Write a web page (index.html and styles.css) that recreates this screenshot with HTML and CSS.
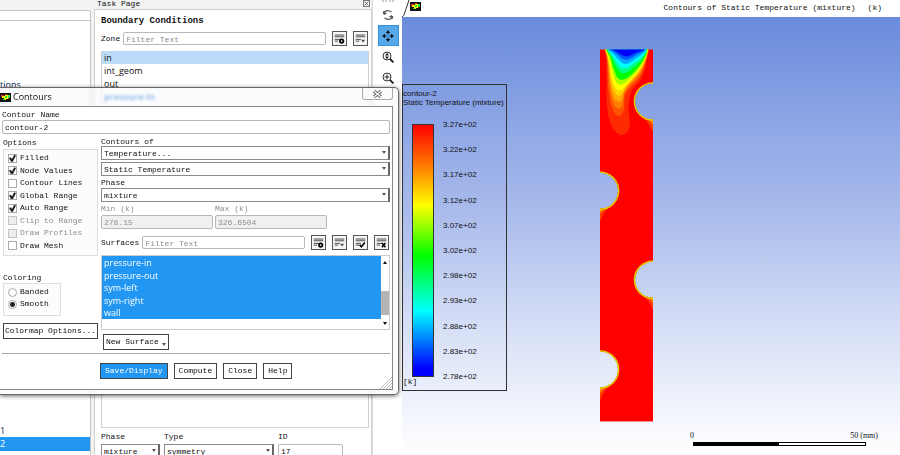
FILE: index.html
```
<!DOCTYPE html>
<html lang="en">
<head>
<meta charset="utf-8">
<title>Contours</title>
<link rel="stylesheet" href="styles.css">
</head>
<body>
<svg class="defs" aria-hidden="true">
  <defs>
    <symbol id="lines" viewBox="0 0 15 15"><path d="M2 3.500h11M2 5.500h11M2 8.500h6M2 10.500h4" stroke="#333" fill="none"/></symbol>
    <symbol id="filter-opt" viewBox="0 0 15 15"><use href="#lines"/><circle cx="10" cy="10.500" r="2" fill="none" stroke="#000" stroke-width="2"/></symbol>
    <symbol id="filter-down" viewBox="0 0 15 15"><use href="#lines"/><path d="M8 9h5l-2.500 3z" fill="#555"/></symbol>
    <symbol id="filter-check" viewBox="0 0 15 15"><use href="#lines"/><path d="M6.500 10l2 2.500 4-5" fill="none" stroke="#000" stroke-width="1.800"/></symbol>
    <symbol id="filter-x" viewBox="0 0 15 15"><use href="#lines"/><path d="M8 8l4 5M12 8l-4 5" fill="none" stroke="#000" stroke-width="1.800"/></symbol>
    <symbol id="app" viewBox="0 0 11 9"><path fill="#111" d="M0 0h11v9H0z"/><path fill="#e22" d="M1 2h3v2H1zM5 1h2v1H5z"/><path fill="#fe0" d="M2 3h3V2h3v4H6v1H4V5H2z"/><path fill="#2e3" d="M5 3h2v2H5zM8 2h2v3H8zM3 6h2v1H3z"/><path fill="#e22" d="M8 5h1v1H8z"/></symbol>
  </defs>
</svg>
<main class="app">
  <aside class="tree">
    <input class="tree-filter" aria-label="Filter outline">
    <div class="tree-body">
      <a class="tree-item" href="#conditions">tions</a>
      <div class="tree-end">
        <a class="tree-item" href="#c1">1</a>
        <a class="tree-item selected" href="#c2">2</a>
      </div>
    </div>
  </aside>
  <section class="task">
    <header class="task-head">
      <span>Task Page</span>
      <button class="close-mini" aria-label="Close task page"><svg viewBox="0 0 7 7"><path d="M1 1l5 5M6 1L1 6" stroke="#333"/></svg></button>
    </header>
    <div class="task-body">
      <h2>Boundary Conditions</h2>
      <div class="filter-row">
        <label for="zone">Zone</label>
        <input id="zone" class="field grow" placeholder="Filter Text">
        <button class="ibtn" aria-label="Filter options"><svg><use href="#filter-opt"/></svg></button>
        <button class="ibtn" aria-label="Filter menu"><svg><use href="#filter-down"/></svg></button>
      </div>
      <ul class="zones">
        <li class="on">in</li>
        <li>int_geom</li>
        <li>out</li>
        <li class="hot">pressure-in</li>
      </ul>
      <div class="zone-props">
        <div class="prop-phase"><label for="zphase">Phase</label><span class="combo"><select id="zphase"><option>mixture</option></select></span></div>
        <div class="prop-type"><label for="ztype">Type</label><span class="combo"><select id="ztype"><option>symmetry</option></select></span></div>
        <div class="prop-id"><label for="zid">ID</label><input id="zid" class="field" value="17"></div>
      </div>
    </div>
  </section>
  <nav class="tools">
    <span class="grip"></span>
    <button aria-label="Rotate"><svg viewBox="0 0 12 12"><path d="M1.500 5V3.500Q5 0 9.500 3M10.500 7v1.500Q7 12 2.500 9" fill="none" stroke="#555" stroke-width="1.200"/><path d="M1 2l1 4 3-1.500zM11 10l-1-4-3 1.500z" fill="#555"/></svg></button>
    <button class="active" aria-label="Pan"><svg viewBox="0 0 12 12"><path d="M6 0l2.200 3H3.800zM6 12l2.200-3H3.800zM0 6l3-2.200v4.400zM12 6L9 3.800v4.400z" fill="#112"/><path d="M6 2v2.500M6 7.500V10M2 6h2.500M7.500 6H10" stroke="#112"/></svg></button>
    <button aria-label="Zoom to fit"><svg viewBox="0 0 12 12"><circle cx="5" cy="5" r="4" fill="none" stroke="#333"/><path d="M8 8l3.500 3.500" stroke="#222" stroke-width="1.800"/><path d="M5 1.800L7 4.500H3zM5 8.200L7 5.500H3z" fill="#222"/></svg></button>
    <button aria-label="Zoom in"><svg viewBox="0 0 12 12"><circle cx="5" cy="5" r="4" fill="none" stroke="#333"/><path d="M8 8l3.500 3.500" stroke="#222" stroke-width="1.800"/><path d="M5 2.500v5M2.500 5h5" stroke="#222"/></svg></button>
  </nav>
  <section class="view">
    <header class="view-head">
      <svg class="tab-edge" viewBox="0 0 8 17"><path d="M0 17Q2 16 3 12L7 0" fill="none" stroke="#333"/></svg>
      <svg class="app-icon"><use href="#app"/></svg>
      <h1>Contours of Static Temperature (mixture)</h1><span class="unit">(k)</span>
    </header>
    <div class="canvas">
      <div class="legend">
        <p>contour-2<br>Static Temperature (mixture)</p>
        <div class="legend-body">
          <div class="ramp"></div>
          <ol>
            <li>3.27e+02</li><li>3.22e+02</li><li>3.17e+02</li><li>3.12e+02</li><li>3.07e+02</li><li>3.02e+02</li><li>2.98e+02</li><li>2.93e+02</li><li>2.88e+02</li><li>2.83e+02</li><li>2.78e+02</li>
          </ol>
        </div>
        <span class="legend-unit">[k]</span>
      </div>
      <svg class="model" viewBox="30 28 159 1118" role="img" aria-label="Temperature field">
        <defs><clipPath id="body"><path d="M30 28H189V131A54 54 0 0 0 189 239V666A54 54 0 0 0 189 774V1146H30V1043A54 54 0 0 0 30 935V507A54 54 0 0 0 30 399Z"/></clipPath></defs>
        <g clip-path="url(#body)">
          <path fill="#f00" d="M30 28h159v1118H30z"/>
          <path fill="#ff2b00" d="M42 28C54 60 48 130 50 190C54 250 75 285 97 285C118 284 122 255 118 235C112 190 118 150 140 135C162 118 172 60 178 28Z"/>
          <path fill="#ff5500" d="M44 28C57 60 50 125 57 165C64 212 76 228 88 228C101 226 104 205 103 182C104 155 122 142 140 124C160 104 170 60 176 28Z"/>
          <path fill="#ff8000" d="M44 28C58 60 54 115 60 150C66 192 76 206 87 206C98 204 100 188 101 170C104 150 122 134 138 118C158 98 170 60 176 28Z"/>
          <path fill="#ffaa00" d="M45 28C59 60 56 110 62 138C68 172 76 186 87 186C98 184 98 170 102 156C108 142 122 128 138 112C156 94 169 56 175 28Z"/>
          <path fill="#ffd500" d="M45 28C60 60 58 105 64 128C70 156 78 168 88 168C98 166 100 154 106 144C112 134 126 120 139 106C156 88 168 56 175 28Z"/>
          <path fill="#ff0" d="M46 28C61 58 61 98 66 116C72 142 80 152 89 152C99 150 104 140 112 132C120 124 130 112 141 100C156 82 168 54 174 28Z"/>
          <path fill="#a8ff00" d="M46 28C63 54 64 88 70 104C76 126 82 135 92 135C102 133 110 124 118 118C128 110 134 102 143 92C156 76 167 52 174 28Z"/>
          <path fill="#0f0" d="M47 28C66 52 66 78 74 94C80 112 86 120 96 120C106 119 114 112 122 106C130 99 137 92 144 83C156 70 167 50 173 28Z"/>
          <path fill="#00ff80" d="M48 28C68 48 70 68 78 80C85 94 92 101 101 101C111 100 118 94 126 87C134 80 140 76 146 70C156 60 166 46 172 28Z"/>
          <path fill="#0ff" d="M49 28C69 44 74 60 82 70C90 81 96 86 104 86C113 85 120 78 128 73C136 67 142 64 148 59C157 51 165 42 171 28Z"/>
          <path fill="#00a8ff" d="M50 28C70 39 77 51 86 60C94 69 99 73 107 73C115 72 122 67 130 62C138 56 145 52 151 47C159 40 165 36 170 28Z"/>
          <path fill="#0055ff" d="M54 28C72 34 80 42 88 49C96 57 102 60 109 60C117 59 125 54 132 49C142 43 156 38 168 28Z"/>
          <path fill="#00f" d="M58 28C74 31 82 36 90 42C98 48 104 50 111 50C119 49 126 44 134 40C144 35 158 32 166 28Z"/>
          <g fill="#ff3c00"><path d="M158 232Q176 245 189 278V232zM158 767Q178 782 189 810V767zM60 500Q42 514 30 544V500zM60 1036Q42 1050 30 1082V1036z"/></g>
          <g fill="#ff8c00"><path d="M166 234Q182 242 189 256V234zM166 769Q182 776 189 790V769zM52 503Q38 510 30 520V503zM52 1039Q38 1046 30 1060V1039z"/></g>
          <g fill="none" stroke="#ffae00" stroke-width="8"><path d="M189 131A54 54 0 0 0 189 239M189 666A54 54 0 0 0 189 774M30 1043A54 54 0 0 0 30 935M30 507A54 54 0 0 0 30 399"/></g>
          <g fill="none" stroke="#b4f000" stroke-width="6" stroke-dasharray="6 3"><path d="M189 131A54 54 0 0 0 189 239M189 666A54 54 0 0 0 189 774M30 1043A54 54 0 0 0 30 935M30 507A54 54 0 0 0 30 399"/></g>
        </g>
      </svg>
      <div class="scale">
        <div class="scale-text"><span>0</span><span>50 (mm)</span></div>
        <div class="scale-bar"></div>
      </div>
    </div>
  </section>
</main>
<form class="dialog" role="dialog" aria-labelledby="dlg-title">
  <header class="titlebar">
    <svg class="app-icon"><use href="#app"/></svg>
    <h2 id="dlg-title">Contours</h2>
    <button type="button" class="win-close" aria-label="Close window"><svg viewBox="0 0 9 8"><path d="M1 1l7 6M8 1L1 7" stroke="#555" stroke-width="3"/><path d="M1 1l7 6M8 1L1 7" stroke="#fff" stroke-width="1.400"/></svg></button>
  </header>
  <div class="client">
    <label class="lbl" for="cname">Contour Name</label>
    <input id="cname" class="field name" value="contour-2">
    <div class="cols">
      <div class="left">
        <span class="lbl options-label">Options</span>
        <div class="group checks">
          <label><input type="checkbox" checked>Filled</label>
          <label><input type="checkbox" checked>Node Values</label>
          <label><input type="checkbox">Contour Lines</label>
          <label><input type="checkbox" checked>Global Range</label>
          <label><input type="checkbox" checked>Auto Range</label>
          <label class="off"><input type="checkbox" disabled>Clip to Range</label>
          <label class="off"><input type="checkbox" disabled>Draw Profiles</label>
          <label><input type="checkbox">Draw Mesh</label>
        </div>
        <span class="lbl coloring-label">Coloring</span>
        <div class="group radios">
          <label><input type="radio" name="coloring">Banded</label>
          <label><input type="radio" name="coloring" checked>Smooth</label>
        </div>
        <button type="button" class="btn colormap">Colormap Options...</button>
      </div>
      <div class="right">
        <label class="lbl first" for="field1">Contours of</label>
        <span class="combo"><select id="field1"><option>Temperature...</option></select></span>
        <span class="combo second"><select aria-label="Variable"><option>Static Temperature</option></select></span>
        <label class="lbl" for="phase">Phase</label>
        <span class="combo"><select id="phase"><option>mixture</option></select></span>
        <div class="range">
          <div><label class="lbl off" for="min">Min (k)</label><input id="min" class="field" value="278.15" disabled></div>
          <div><label class="lbl off" for="max">Max (k)</label><input id="max" class="field" value="326.6504" disabled></div>
        </div>
        <div class="filter-row surf">
          <label for="surf">Surfaces</label>
          <input id="surf" class="field grow" placeholder="Filter Text">
          <button type="button" class="ibtn" aria-label="Filter options"><svg><use href="#filter-opt"/></svg></button>
          <button type="button" class="ibtn" aria-label="Filter menu"><svg><use href="#filter-down"/></svg></button>
          <button type="button" class="ibtn" aria-label="Select all"><svg><use href="#filter-check"/></svg></button>
          <button type="button" class="ibtn" aria-label="Clear selection"><svg><use href="#filter-x"/></svg></button>
        </div>
        <div class="surfaces">
          <ul><li>pressure-in</li><li>pressure-out</li><li>sym-left</li><li>sym-right</li><li>wall</li></ul>
          <div class="scroll"><i class="up"></i><i class="thumb"></i><i class="down"></i></div>
        </div>
        <button type="button" class="btn new-surface">New Surface<i class="down"></i></button>
      </div>
    </div>
    <hr>
    <footer class="actions">
      <button type="button" class="btn primary">Save/Display</button>
      <button type="button" class="btn">Compute</button>
      <button type="button" class="btn">Close</button>
      <button type="button" class="btn">Help</button>
    </footer>
    <svg class="resize" viewBox="0 0 12 12"><path d="M0 12L12 0M3 12l9-9M6 12l6-6M9 12l3-3" stroke="#bbb"/></svg>
  </div>
</form>
</body>
</html>
```

FILE: styles.css
```
* { box-sizing: border-box; }

body {
  margin: 0;
  height: 100vh;
  overflow: hidden;
  position: relative;
  background: #f3f3f3;
  color: #111;
  font: 8px/12px "Liberation Mono", monospace;
}

h1, h2, p, ul, ol { margin: 0; padding: 0; font: inherit; list-style: none; }
button, input, select { font: inherit; color: inherit; margin: 0; }
button { padding: 0; border: 0; background: none; }
svg { display: block; }
.defs { position: absolute; width: 0; height: 0; }

.app {
  display: grid;
  grid-template-columns: 91px 281px 30px minmax(0, 1fr);
  height: 100%;
}

/* outline tree */
.tree { display: flex; flex-direction: column; padding-top: 10px; }
.tree-filter {
  width: 100%;
  height: 11px;
  border: 1px solid #c4c4c4;
  border-left: 0;
  border-radius: 0 2px 0 0;
  background: #fff;
}
.tree-body {
  flex: 1;
  display: flex;
  flex-direction: column;
  justify-content: space-between;
  padding: 57px 0 4px;
  border-right: 1px solid #c4c4c4;
  background: #fff;
}
.tree-item {
  display: block;
  height: 13px;
  color: #0f2f66;
  text-decoration: none;
  font: 9px/13px "Open Sans", sans-serif;
}
.tree-item.selected { height: 14px; background: #2196f3; color: #fff; }

/* task page */
.task { display: flex; flex-direction: column; padding-left: 3px; }
.task-head { display: flex; justify-content: space-between; height: 9px; line-height: 7px; padding: 0 2px 0 3px; }
.close-mini { width: 7px; height: 7px; border: 1px solid #777; }
.close-mini svg { width: 5px; height: 5px; }
.task-body {
  flex: 1;
  display: flex;
  flex-direction: column;
  padding: 5px 2px 0 6px;
  border: 1px solid #d0d0d0;
  border-bottom: 0;
  background: #fff;
}
.task-body h2 { font-size: 9px; font-weight: bold; line-height: 12px; }
.filter-row { display: flex; align-items: center; gap: 6px; height: 15px; }
.task-body .filter-row { margin: 4px 1px 0 0; }
.filter-row label { margin-right: -3px; line-height: 14px; }
.grow { flex: 1; min-width: 0; }
.field {
  height: 13px;
  padding: 1px 2px 0;
  border: 1px solid #b8b8b8;
  border-radius: 2px;
  background: #fff;
  outline: 0;
}
.field::placeholder { color: #8c8c8c; opacity: 1; }
.ibtn { width: 15px; height: 15px; border: 1px solid #555; background: #f6f6f6; }
.ibtn svg { width: 13px; height: 13px; }
.zones {
  flex: 1;
  margin-top: 5px;
  border: 1px solid #d0d0d0;
  border-top: 0;
  font: 9px/14px "Open Sans", sans-serif;
}
.zones li { height: 13px; padding-left: 2px; }
.zones .on { background: #badcf8; }
.zones .hot { color: #0066e0; font-weight: bold; }
.zone-props { display: flex; gap: 4px; height: 25px; margin-top: 2px; }
.zone-props label { display: block; line-height: 14px; }
.prop-phase { width: 59px; }
.prop-type { width: 110px; }
.prop-id { width: 65px; }
.prop-id .field { width: 100%; }

.combo { display: block; position: relative; }
.combo select {
  appearance: none;
  display: block;
  width: 100%;
  height: 14px;
  padding: 1px 12px 0 2px;
  border: 1px solid #8a8a8a;
  border-right: 2px solid #666;
  border-radius: 0;
  background: #fff;
}
.combo::after {
  content: "";
  position: absolute;
  right: 4px;
  top: 5px;
  border: 2px solid transparent;
  border-top: 3px solid #555;
  border-bottom: 0;
}

/* view tools */
.tools { display: flex; flex-direction: column; align-items: center; padding-left: 1px; background: #fff; border-left: 1px solid #ddd; }
.tools .grip { width: 12px; height: 4px; border-top: 2px dotted #ccc; }
.tools button { display: grid; place-items: center; width: 21px; height: 21px; }
.tools .active { background: #57a8e8; border: 1px solid #3a90d8; }
.tools svg { width: 12px; height: 12px; }

/* graphics view */
.view { display: flex; flex-direction: column; min-width: 0; }
.view-head { display: flex; align-items: flex-start; height: 17px; padding: 2px 18px 0 0; background: #fff; }
.app-icon { width: 11px; height: 9px; }
.tab-edge { width: 8px; height: 17px; margin-top: -2px; }
.view-head h1 { margin-left: auto; }
.unit { margin-left: 12px; }
.canvas {
  flex: 1;
  position: relative;
  display: flex;
  align-items: flex-start;
  background: linear-gradient(#6a8bdc, #aabcec 45%, #d5def6 70%, #fff);
}
.legend {
  width: 105px;
  margin-top: 67px;
  padding: 4px 0;
  border: 1px solid #333;
  font: 8px/9px "Liberation Sans", sans-serif;
  white-space: nowrap;
}
.legend-body { display: flex; align-items: center; gap: 9px; height: 261px; margin: 13px 0 0 9px; }
.ramp {
  width: 22px;
  height: 253px;
  border: 1px solid #333;
  background: linear-gradient(#f00, #ff8000 17%, #ff0 32%, #0f0 52%, #0ff 74%, #00f 97%);
}
.legend ol { display: flex; flex-direction: column; justify-content: space-between; height: 100%; }
.legend-unit { display: block; margin-top: -4px; font-family: "Liberation Mono", monospace; }
.model { width: 53px; height: 373px; margin: 32px 0 0 93px; }
.scale { position: absolute; right: 22px; bottom: 9px; width: 188px; font: 8px/10px "Liberation Serif", serif; }
.scale-text { display: flex; justify-content: space-between; }
.scale-bar {
  width: 173px;
  height: 4px;
  margin: 1px 0 0 3px;
  border: 1px solid #000;
  background: linear-gradient(90deg, #000 50%, #fff 50%);
}

/* contours window */
.dialog {
  position: absolute;
  left: 0;
  top: 87px;
  width: 399px;
  padding: 0 5px 4px 0;
  border: 1px solid #666;
  border-left: 0;
  border-radius: 0 5px 5px 0;
  background: rgba(246, 249, 250, .65);
  backdrop-filter: blur(1px);
  box-shadow: 0 1px 4px rgba(0, 0, 0, .6), inset -1px -1px 0 #fff;
}
.titlebar { display: flex; align-items: center; height: 18px; }
.titlebar h2 { margin-left: 2px; font: 9px/18px "Open Sans", sans-serif; }
.win-close {
  display: grid;
  place-items: center;
  align-self: flex-start;
  width: 31px;
  height: 12px;
  margin-left: auto;
  border: 1px solid #aaa;
  border-top: 0;
  border-radius: 0 0 3px 3px;
  background: #fbfbfb;
}
.win-close svg { width: 9px; height: 8px; }
.client {
  position: relative;
  padding: 1px 2px 10px;
  border: 1px solid #888;
  border-left: 0;
  background: #fff;
}
.lbl { display: block; height: 12px; line-height: 14px; }
.field.name { display: block; width: 100%; height: 14px; }
.cols { display: grid; grid-template-columns: 96px minmax(0, 1fr); gap: 3px; margin-top: 1px; }
.left { padding-left: 1px; }
.options-label { margin-top: 1px; }
.coloring-label { margin-top: 15px; }
.group { display: grid; grid-auto-rows: 1fr; border: 1px solid #ddd; background: #fcfcfc; }
.group label { display: flex; align-items: center; gap: 3px; padding-left: 4px; white-space: nowrap; }
.checks { height: 107px; margin-top: 1px; padding: 2px 0 3px; }
.radios { width: 58px; height: 33px; padding: 2px 0 5px; }
.off, .field:disabled { color: #8f8f8f; }
.group input { appearance: none; width: 9px; height: 9px; border: 1px solid #aaa; background: #fff; }
.group input:disabled { background: #eee; border-color: #c4c4c4; }
.group input[type="checkbox"]:checked { display: grid; place-items: center; }
.group input[type="checkbox"]:checked::before {
  content: "";
  width: 7px;
  height: 7px;
  background: #222;
  clip-path: polygon(0 45%, 25% 35%, 42% 60%, 75% 0, 100% 10%, 55% 100%, 30% 100%);
}
.group input[type="radio"] { border-radius: 50%; }
.group input[type="radio"]:checked { background: radial-gradient(#222 0 2px, #fff 3px); }
.btn { height: 16px; padding: 0 4px; border: 1px solid #444; background: #fff; line-height: 14px; white-space: nowrap; }
.colormap { width: 100%; margin-top: 7px; padding: 0; }
.first { height: 11px; line-height: 13px; }
.second { margin-top: 2px; }
.range { display: flex; gap: 2px; }
.range div { width: 112px; }
.range .field { display: block; width: 100%; height: 14px; margin-top: 1px; background: #f0f0f0; }
.surf { margin: 6px 1px 0 0; }
.surfaces { display: flex; height: 75px; margin-top: 5px; border: 1px solid #ccc; }
.surfaces ul {
  flex: 1;
  display: grid;
  grid-auto-rows: 1fr;
  height: 63px;
  background: #2196f3;
  color: #fff;
  font: 9px/14px "Open Sans", sans-serif;
}
.surfaces li { height: 12px; padding-left: 2px; }
.scroll { display: flex; flex-direction: column; align-items: center; width: 8px; padding: 5px 0 4px; }
.up { border: 2px solid transparent; border-top: 0; border-bottom: 3px solid #111; }
.down { border: 2px solid transparent; border-bottom: 0; border-top: 3px solid #111; }
.thumb { width: 8px; height: 24px; margin-top: auto; margin-bottom: 7px; background: #b4b4b4; }
.new-surface { display: flex; align-items: center; gap: 3px; margin: 4px 0 0 2px; padding: 0 2px; }
.new-surface .down { margin-top: 5px; border-top-color: #555; }
hr { height: 1px; margin: 3px 0 0; border: 0; background: #aaa; }
.actions { display: flex; gap: 6px; margin: 9px 0 0 98px; }
.primary { background: #2196f3; color: #fff; }
.resize { position: absolute; right: 0; bottom: 0; width: 12px; height: 12px; }
```
